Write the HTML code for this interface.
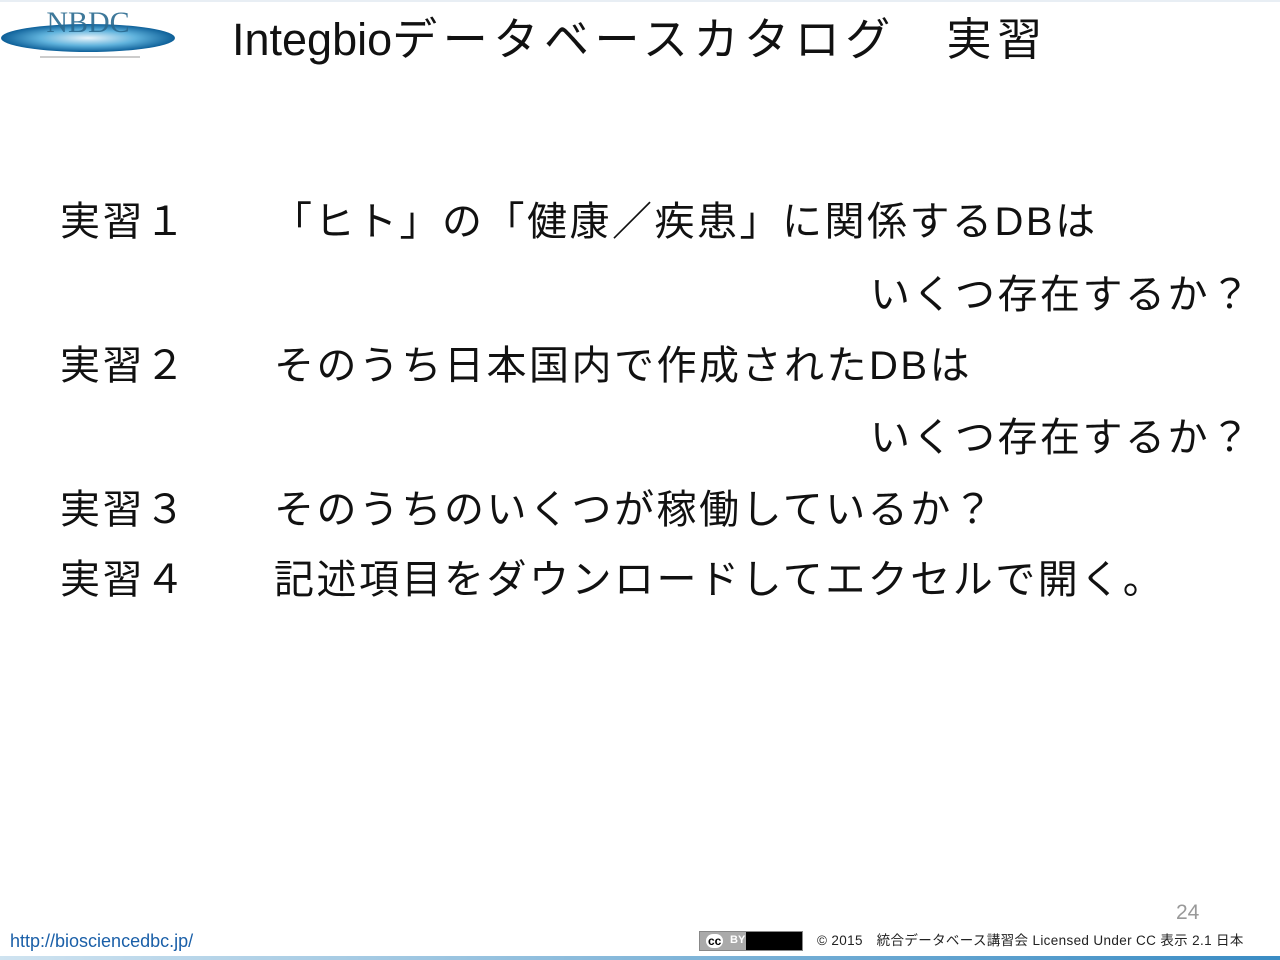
<html><head><style>
body{margin:0;width:1280px;height:960px;background:#fff;position:relative;overflow:hidden;font-family:"Liberation Sans","Noto Sans CJK JP",sans-serif;color:#111}
.t{position:absolute;white-space:nowrap;line-height:1}
.b{font-size:40px;letter-spacing:2.5px}
</style></head><body>
<div style="position:absolute;left:0;top:0;width:1280px;height:2px;background:#e8eef4"></div>
<svg style="position:absolute;left:0;top:0" width="180" height="65">
<defs><radialGradient id="g" cx="50%" cy="50%" r="50%"><stop offset="0" stop-color="#e8f4fb"/><stop offset="0.55" stop-color="#5fb2dc"/><stop offset="1" stop-color="#0d5f98"/></radialGradient></defs>
<ellipse cx="88" cy="38" rx="87" ry="14" fill="url(#g)"/>
<text x="88" y="32" text-anchor="middle" font-family="Liberation Serif" font-size="30" fill="#2a6a90" opacity="0.9">NBDC</text>
<rect x="40" y="56" width="100" height="2" fill="#ccc"/>
</svg>
<div class="t" style="left:232px;top:17px;font-size:45px">Integbio<span style="letter-spacing:5.6px">データベースカタログ　実習</span></div>
<div class="t b" style="left:60px;top:202px">実習１</div>
<div class="t b" style="left:272px;top:202px">「ヒト」の「健康／疾患」に関係するDBは</div>
<div class="t b" style="left:870px;top:275px">いくつ存在するか？</div>
<div class="t b" style="left:60px;top:346px">実習２</div>
<div class="t b" style="left:274px;top:346px">そのうち日本国内で作成されたDBは</div>
<div class="t b" style="left:870px;top:418px">いくつ存在するか？</div>
<div class="t b" style="left:60px;top:490px">実習３</div>
<div class="t b" style="left:274px;top:490px">そのうちのいくつが稼働しているか？</div>
<div class="t b" style="left:60px;top:560px">実習４</div>
<div class="t b" style="left:274px;top:560px">記述項目をダウンロードしてエクセルで開く。</div>
<div class="t" style="left:1176px;top:902px;font-size:21px;color:#999">24</div>
<div class="t" style="left:10px;top:932px;font-size:18px;color:#1a5fa8">http://biosciencedbc.jp/</div>
<div style="position:absolute;left:699px;top:931px;width:104px;height:20px;background:#000;border:1px solid #888;box-sizing:border-box">
<div style="position:absolute;left:0;top:0;width:46px;height:18px;background:#aaa"></div>
<div class="t" style="left:6px;top:2px;font-size:12px;font-weight:bold;color:#000;background:#fff;border-radius:8px;padding:1px 2px">cc</div>
<div class="t" style="left:30px;top:3px;font-size:11px;font-weight:bold;color:#fff">BY</div></div>
<div class="t" style="left:817px;top:934px;font-size:13.5px;letter-spacing:0.35px;color:#222">© 2015　統合データベース講習会 Licensed Under CC 表示 2.1 日本</div>
<div style="position:absolute;left:0;top:956px;width:1280px;height:4px;background:linear-gradient(90deg,#cfe3f0,#3a8cc4)"></div>
</body></html>
